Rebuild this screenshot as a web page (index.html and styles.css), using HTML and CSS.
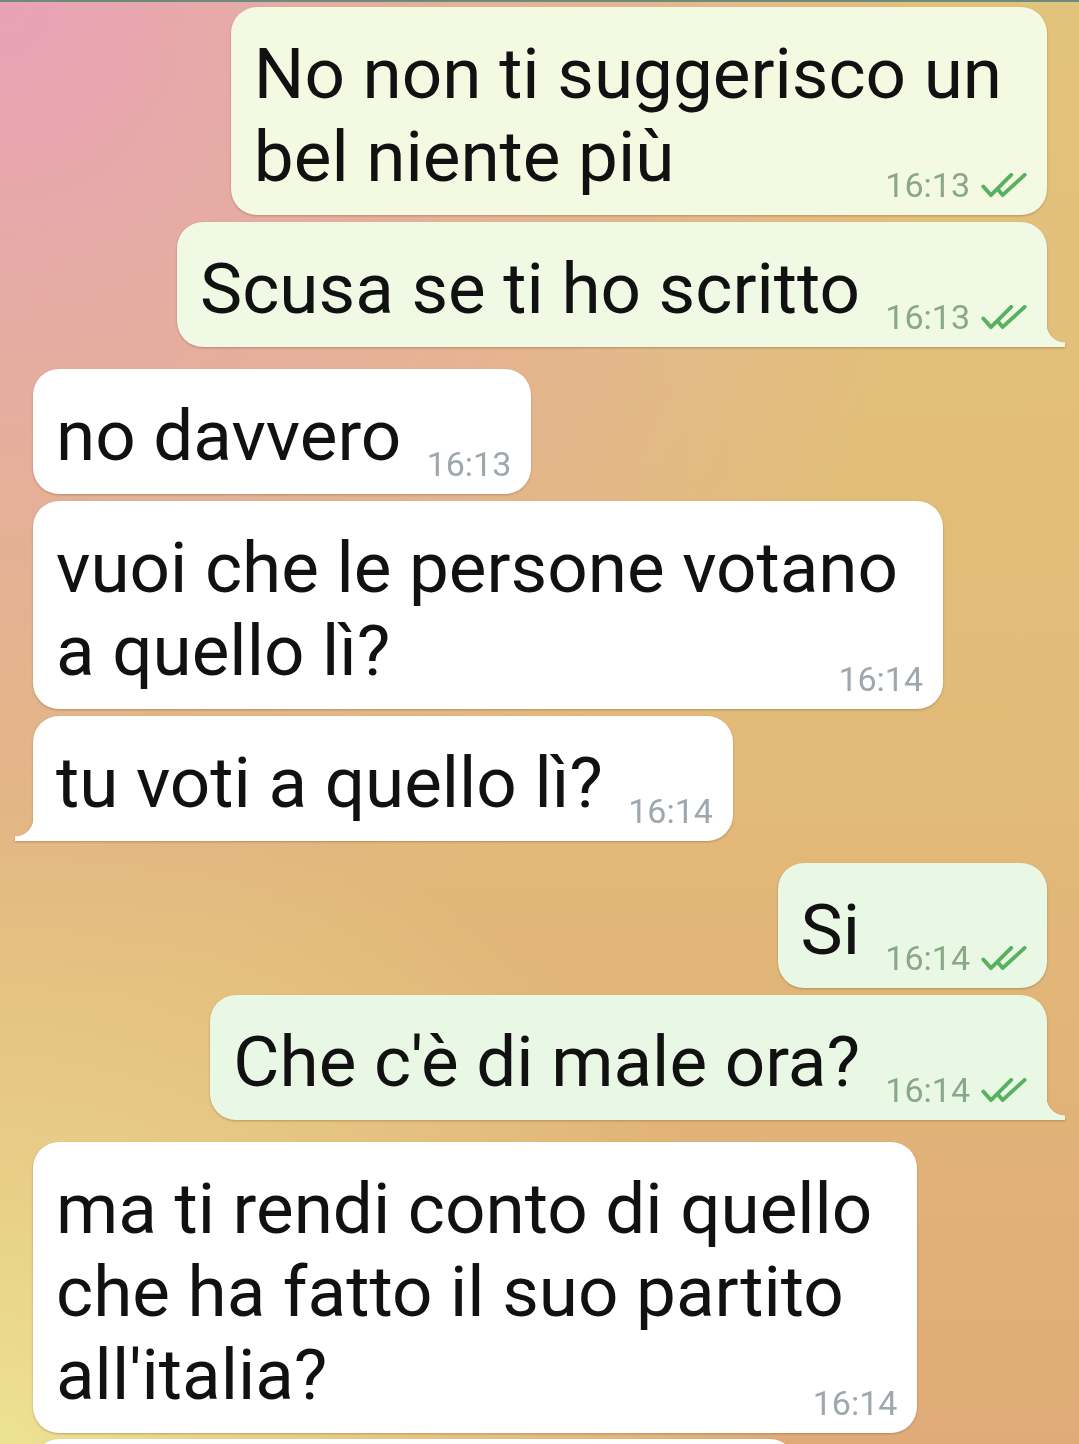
FILE: index.html
```html
<!DOCTYPE html>
<html lang="it">
  <head>
    <meta charset="UTF-8" />
    <meta name="viewport" content="width=device-width, initial-scale=1.0" />
    <title>Chat</title>
    <link rel="stylesheet" href="styles.css">
  </head>
  <body>
    <div class="topbar"></div>

    <main class="chat">
      <div class="msg out tone-1 multi">
        <div class="bubble">
          <p class="text">No non ti suggerisco un<br>bel niente più<span class="spacer"></span></p>
          <span class="meta">
            <span class="time">16:13</span>
            <svg class="ticks" viewBox="0 0 47 26"><path d="M2 14 L10 23 L31 2" /><path d="M18 18 L22 23 L45 2" /></svg>
          </span>
        </div>
      </div>

      <div class="msg out tone-2 tail">
        <div class="bubble">
          <p class="text">Scusa se ti ho scritto<span class="spacer"></span></p>
          <span class="meta">
            <span class="time">16:13</span>
            <svg class="ticks" viewBox="0 0 47 26"><path d="M2 14 L10 23 L31 2" /><path d="M18 18 L22 23 L45 2" /></svg>
          </span>
        </div>
      </div>

      <div class="msg in group-start">
        <div class="bubble">
          <p class="text">no davvero<span class="spacer"></span></p>
          <span class="meta"><span class="time">16:13</span></span>
        </div>
      </div>

      <div class="msg in multi">
        <div class="bubble">
          <p class="text">vuoi che le persone votano<br>a quello lì?<span class="spacer"></span></p>
          <span class="meta"><span class="time">16:14</span></span>
        </div>
      </div>

      <div class="msg in tail">
        <div class="bubble">
          <p class="text">tu voti a quello lì?<span class="spacer"></span></p>
          <span class="meta"><span class="time">16:14</span></span>
        </div>
      </div>

      <div class="msg out tone-3 group-start">
        <div class="bubble">
          <p class="text">Si<span class="spacer"></span></p>
          <span class="meta">
            <span class="time">16:14</span>
            <svg class="ticks" viewBox="0 0 47 26"><path d="M2 14 L10 23 L31 2" /><path d="M18 18 L22 23 L45 2" /></svg>
          </span>
        </div>
      </div>

      <div class="msg out tone-3 tail">
        <div class="bubble">
          <p class="text">Che c'è di male ora?<span class="spacer"></span></p>
          <span class="meta">
            <span class="time">16:14</span>
            <svg class="ticks" viewBox="0 0 47 26"><path d="M2 14 L10 23 L31 2" /><path d="M18 18 L22 23 L45 2" /></svg>
          </span>
        </div>
      </div>

      <div class="msg in group-start multi">
        <div class="bubble">
          <p class="text">ma ti rendi conto di quello<br>che ha fatto il suo partito<br>all'italia?<span class="spacer"></span></p>
          <span class="meta"><span class="time">16:14</span></span>
        </div>
      </div>

      <div class="msg in next">
        <div class="bubble">
          <p class="text">&nbsp;</p>
        </div>
      </div>
    </main>
  </body>
</html>
```

FILE: styles.css
```css
body {
  margin: 0;
  height: 1444px;
  overflow: hidden;
  font-family: Roboto, "Noto Sans", sans-serif;
  color: #111;
  background:
    radial-gradient(ellipse 950px 1000px at 0 0, rgba(232, 162, 182, 1) 0%, rgba(232, 162, 182, 0) 100%),
    radial-gradient(ellipse 780px 660px at 0 100%, rgba(237, 226, 146, 1) 0%, rgba(237, 226, 146, 0) 100%),
    linear-gradient(to bottom, #e2c37c 0%, #e2ba79 55%, #e0ab78 100%);
}
.topbar {
  height: 2px;
  background-color: #6d8a7b;
}
.chat {
  display: flex;
  flex-direction: column;
  gap: 7px;
  padding: 5px 32px 0 33px;
}
.msg {
  display: flex;
}
.msg.out {
  justify-content: flex-end;
}
.msg.group-start {
  margin-top: 15px;
}
.bubble {
  position: relative;
  display: grid;
  padding: 25px 20px 17px 23px;
  border-radius: 26px;
  background-color: #fff;
  filter: drop-shadow(0 1.5px 1px rgba(90, 70, 30, 0.35));
  --spacer: 110px;
}
.out .bubble {
  --spacer: 167px;
}
.tone-1 .bubble { background-color: #f4f9e2; }
.tone-2 .bubble { background-color: #eff9e4; }
.tone-3 .bubble { background-color: #e9f7e5; }
.text {
  grid-area: 1 / 1;
  margin: 0;
  font-size: 71px;
  line-height: 83px;
  white-space: nowrap;
}
.multi .text {
  padding-right: 25px;
}
.spacer {
  display: inline-block;
  width: var(--spacer);
}
.meta {
  grid-area: 1 / 1;
  justify-self: end;
  align-self: end;
  display: flex;
  align-items: center;
  gap: 11px;
  margin-bottom: -3px;
  font-size: 34px;
  line-height: 32px;
}
.in .time {
  color: #9ea7ac;
}
.out .time {
  color: #8aa888;
}
.ticks {
  width: 46px;
  height: 25px;
  fill: none;
  stroke: #58b15f;
  stroke-width: 4;
  stroke-linecap: round;
  stroke-linejoin: round;
}

/* bubble tails */
.out.tail .bubble {
  border-bottom-right-radius: 0;
}
.in.tail .bubble {
  border-bottom-left-radius: 0;
}
.tail .bubble::after {
  content: "";
  position: absolute;
  bottom: 0;
  width: 19px;
  height: 23px;
}
.out.tail .bubble::after {
  right: -18px;
  background: radial-gradient(circle at 100% 0, transparent 18px, #eff9e4 18.8px);
}
.out.tone-3.tail .bubble::after {
  background: radial-gradient(circle at 100% 0, transparent 18px, #e9f7e5 18.8px);
}
.in.tail .bubble::after {
  left: -18px;
  background: radial-gradient(circle at 0 0, transparent 18px, #fff 18.8px);
}

.msg.next {
  margin-top: -1px;
}
.next .bubble {
  width: 720px;
}
```
